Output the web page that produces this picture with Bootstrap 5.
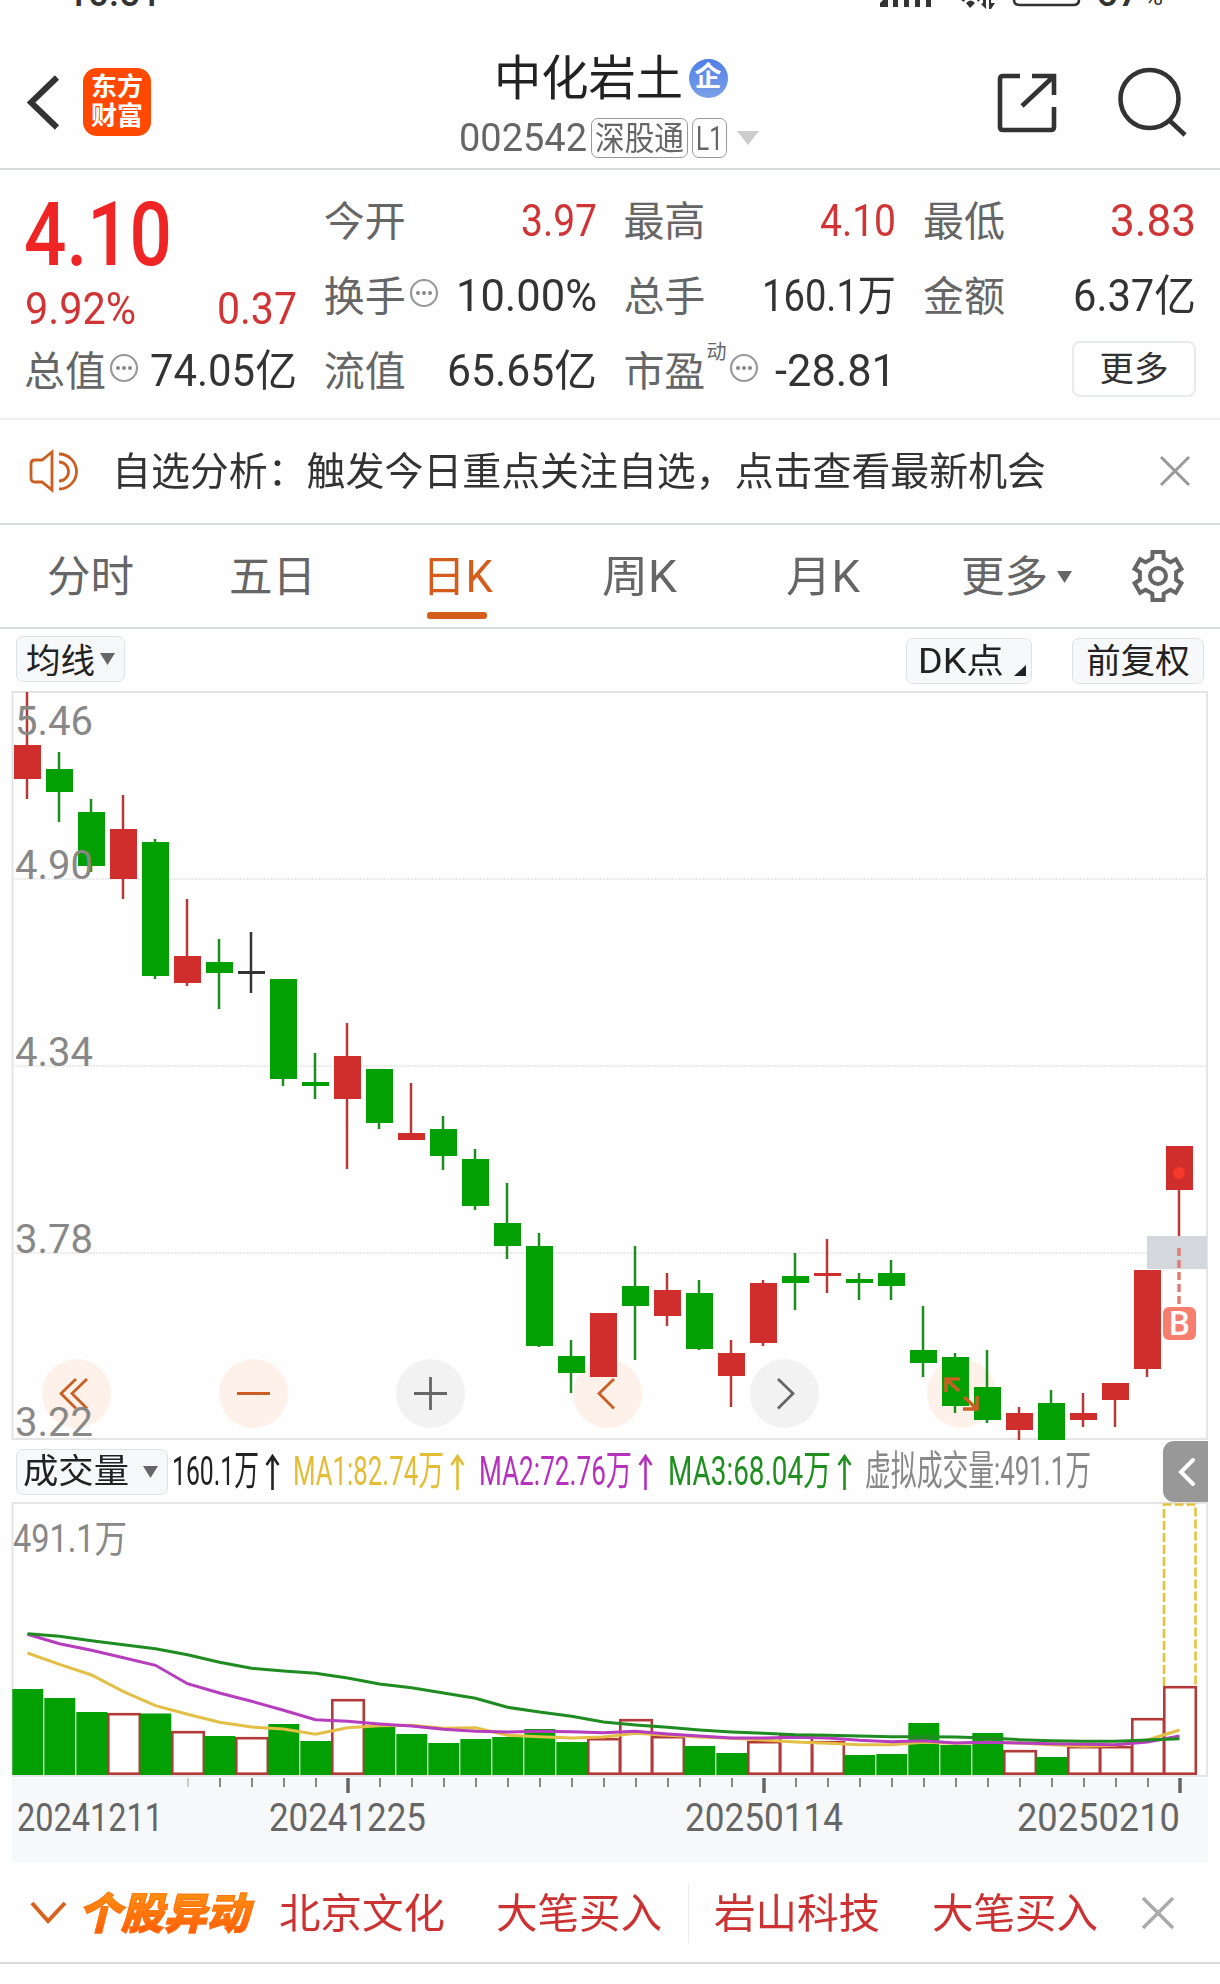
<!DOCTYPE html>
<html lang="zh-CN">
<head>
<meta charset="utf-8">
<meta name="viewport" content="width=device-width, initial-scale=1">
<title>中化岩土 002542</title>
<link rel="stylesheet" href="https://cdn.jsdelivr.net/npm/bootstrap@5.3.0/dist/css/bootstrap.min.css">
<style>
body{width:1220px;height:1984px;overflow:hidden;background:#fefefe;color:#333;font-family:Roboto,"Noto Sans CJK SC",sans-serif;line-height:1}
svg{display:block;flex:none}
svg text{font-family:Roboto,"Noto Sans CJK SC",sans-serif}
.fit{display:inline-block;white-space:nowrap;transform-origin:0 50%;flex:none}
.up{color:#d03434}.dim{color:#666}
.topbar{height:170px;border-bottom:2px solid #d9dada}
.statusbar{height:10px}
.headgrid{display:grid;grid-template-columns:450px 320px 1fr;height:158px}
.backbox{padding:56px 0 0 27px;gap:23px}
.applogo{width:68px;height:68px;border-radius:14px;background:#ff4800;color:#fff;font-size:26px;font-weight:700;line-height:29px;margin-top:2px}
.stockname{font-size:47.5px;color:#222;height:48px;margin-top:45px;line-height:48px}
.certdot{width:39px;height:39px;border-radius:50%;background:linear-gradient(#5080e6,#7ba0e8);color:#fff;font-size:27px;font-weight:700;line-height:37px;margin:-2px -1px 0 6px}
.coderow{font-size:39px;color:#666;height:42px;margin-top:14px}
.chip{border:1.5px solid #999;border-radius:7px;height:40px;font-size:33px;padding:0 3px;margin-left:4px}
.quote{height:250px;padding:14px 0 0 25px;border-bottom:2px solid #efefef;display:grid;grid-template-columns:repeat(4,272px);column-gap:27.7px;grid-template-rows:75px 75px 75px;font-size:43.5px}
.quote .cell{height:75px;padding-top:1px}
.quote .lbl{font-size:41px;color:#666;margin-left:-1px}
.pricebox{grid-row:1/3;font-size:45px}
.bigprice{font-size:89px;font-weight:500;color:#ef2525;height:94px;line-height:94px;margin-left:-1px}
.morebtn{width:124px;height:56px;border:2px solid #e8eaeb;border-radius:8px;font-size:34.5px;line-height:50px;padding:0;color:#333;background:#fff;margin:-6px 0 0 auto}
.sup{font-size:20px;align-self:flex-start;margin-top:7px;margin-left:1px}
.notice{height:105px;border-bottom:2px solid #dadcdc;padding-left:26px;font-size:39px}
.notice .fit{margin-top:2px}
.tabs{height:104px;border-bottom:2px solid #dadcdc;font-size:43.5px;color:#666;display:grid;grid-template-columns:47px 182px 193px 180px 184px 175px 168px 87px;align-items:center}
.tabs>span{padding-top:4px}
.tabs .on{color:#d45d1b;position:relative}
.tabs .on::after{content:"";position:absolute;left:5px;top:60px;width:60px;height:7px;border-radius:3px;background:#d45d1b}
.tools{height:55px;padding:7px 16px 0}
.tool{border:1.5px solid #dfe2e5;border-radius:7px;background:#f7f8fa;color:#222;height:46px;font-size:34.5px}
.volrow{height:61px;font-size:40.5px}
.side{width:45px;height:61px;background:#989898;border-radius:11px 0 0 11px}
.movers{height:101px;border-bottom:2px solid #d9dada;font-size:41.4px;color:#cc3232;padding-left:30px}
.movers span{padding-top:4px}
.tagword{font-size:43px;font-weight:900;font-style:italic;background:linear-gradient(#ff9712,#ff5807);-webkit-background-clip:text;background-clip:text;color:transparent;-webkit-text-stroke:1px #ff7210;padding-right:7px}
</style>
<script src="https://cdn.jsdelivr.net/npm/bootstrap@5.3.0/dist/js/bootstrap.bundle.min.js"></script>
</head>
<body>
<header class="topbar">
  <div class="statusbar">
    <svg width="1220" height="10" viewBox="0 0 1220 10" fill="#333">
      <text x="67" y="6" font-size="38" font-weight="500" textLength="94" lengthAdjust="spacingAndGlyphs">10:51</text>
      <path d="M880 7V3l3-3h5v7zM893 0h5v7h-5zM904 0h5v7h-5zM915 0h5v7h-5zM926 0h5v7h-5z"/>
      <path d="M961 0h4l-1 2zM966 3q5-5 9 0l-5 5zM977 0h3l-2 2zM983 0h3v9l-5-5 2-1zM989 0h2v3h4l-4 6h-2z"/>
      <path d="M1014-10V0q0 5 6 5h53q6 0 6-5v-10" fill="none" stroke="#333" stroke-width="2.6"/>
      <text x="1096" y="6" font-size="38" font-weight="500" textLength="44" lengthAdjust="spacingAndGlyphs">67</text>
      <text x="1144" y="5" font-size="23" textLength="19" lengthAdjust="spacingAndGlyphs">%</text>
    </svg>
  </div>
  <div class="headgrid">
    <div class="d-flex align-items-start backbox">
      <svg width="33" height="72" viewBox="0 0 33 72"><path d="M30 12 4 37l26 25" transform="translate(0 -.5)" fill="none" stroke="#333" stroke-width="6"/></svg>
      <div class="applogo text-center d-flex flex-column justify-content-center"><span>东方</span><span>财富</span></div>
    </div>
    <div class="d-flex flex-column align-items-center">
      <div class="d-flex align-items-center stockname"><span class="fit" data-w="189">中化岩土</span><span class="certdot text-center">企</span></div>
      <div class="d-flex align-items-center coderow"><span class="fit" data-w="128">002542</span><span class="chip d-flex align-items-center"><span class="fit" data-w="89">深股通</span></span><span class="chip d-flex align-items-center"><span class="fit" data-w="27">L1</span></span><svg class="ms-2" width="26" height="18"><path d="M2 2h22L13 16z" fill="#ccc"/></svg></div>
    </div>
    <div class="d-flex align-items-start justify-content-end">
      <svg width="200" height="140" viewBox="990 10 200 140" style="margin-right:30px" fill="none" stroke="#333" stroke-width="4.6"><path d="M1020 76h-17q-3 0-3 3v48q0 3 3 3h48q3 0 3-3v-20M1032 76h22v19M1053 77l-31 29"/><circle cx="1149.500" cy="99" r="29"/><path d="m1169 120 16 15"/></svg>
    </div>
  </div>
</header>

<section class="quote">
  <div class="pricebox">
    <div class="bigprice mt-1"><span class="fit" data-w="148">4.10</span></div>
    <div class="d-flex justify-content-between up pt-1"><span class="fit" data-w="111">9.92%</span><span class="fit" data-w="80">0.37</span></div>
  </div>
  <div class="cell d-flex align-items-center justify-content-between"><span class="lbl">今开</span><span class="fit up" data-w="76">3.97</span></div>
  <div class="cell d-flex align-items-center justify-content-between"><span class="lbl">最高</span><span class="fit up" data-w="76">4.10</span></div>
  <div class="cell d-flex align-items-center justify-content-between"><span class="lbl">最低</span><span class="fit up" data-w="86">3.83</span></div>
  <div class="cell d-flex align-items-center"><span class="lbl">换手</span><svg class="dots" width="32" height="32" viewBox="0 0 32 32"></svg><span class="fit ms-auto" data-w="141">10.00%</span></div>
  <div class="cell d-flex align-items-center justify-content-between"><span class="lbl">总手</span><span class="fit" data-w="134">160.1万</span></div>
  <div class="cell d-flex align-items-center justify-content-between"><span class="lbl">金额</span><span class="fit" data-w="123">6.37亿</span></div>
  <div class="cell d-flex align-items-center"><span class="lbl">总值</span><svg class="dots" width="32" height="32" viewBox="0 0 32 32"></svg><span class="fit ms-auto" data-w="147">74.05亿</span></div>
  <div class="cell d-flex align-items-center justify-content-between"><span class="lbl">流值</span><span class="fit" data-w="150">65.65亿</span></div>
  <div class="cell d-flex align-items-center"><span class="lbl">市盈</span><span class="sup dim">动</span><svg class="dots" width="32" height="32" viewBox="0 0 32 32"></svg><span class="fit ms-auto" data-w="121">-28.81</span></div>
  <div class="cell d-flex align-items-center"><button class="btn morebtn">更多</button></div>
</section>

<section class="notice d-flex align-items-center">
  <svg width="86" height="50" viewBox="27 447 86 50" fill="none" stroke="#cb5f20" stroke-width="2.8"><path d="M53 452 43 460h-7q-4 0-4 4v14q0 4 4 4h7l10 8zM60 454a17.5 17.5 0 0 1 0 35M60 462a9.5 9.5 0 0 1 0 19"/></svg>
  <span class="fit" data-w="934">自选分析：触发今日重点关注自选，点击查看最新机会</span>
  <svg class="ms-auto" style="margin-right:28px" width="34" height="34"><path d="m3 2 28 28M31 2 3 30" stroke="#999" stroke-width="3"/></svg>
</section>

<nav class="tabs">
  <i></i><span>分时</span><span>五日</span><span class="on"><span class="fit" data-w="71">日K</span></span><span><span class="fit" data-w="75">周K</span></span><span><span class="fit" data-w="74">月K</span></span>
  <span class="d-flex align-items-center"><span>更多</span><svg style="margin-left:8px" width="18" height="14"><path d="M1 0h15L8.500 12z" fill="#666"/></svg></span>
  <svg id="gear" width="60" height="60" viewBox="-29 -30 60 60" fill="none" stroke="#666" stroke-width="4"></svg>
</nav>

<div class="tools d-flex align-items-start">
  <div class="tool d-flex align-items-center" style="width:109px;padding-left:9px"><span class="pt-1">均线</span><svg style="margin-left:5px" width="16" height="14"><path d="M0 1h15L7.500 13z" fill="#666"/></svg></div>
  <div class="tool d-flex align-items-center ms-auto" style="width:126px;padding-left:11px;margin-top:2px"><span class="fit" data-w="86">DK点</span><svg style="margin-left:10px" width="12" height="34"><path d="M12 21v11H0z" fill="#222"/></svg></div>
  <div class="tool d-flex align-items-center justify-content-center" style="width:132px;margin:2px 0 0 40px">前复权</div>
</div>

<svg id="kline" width="1220" height="757" viewBox="0 684 1220 757"></svg>

<div class="volrow d-flex align-items-center">
  <div class="tool d-flex align-items-center" style="width:152px;margin-left:16px;padding-left:6px"><span class="fit" data-w="106">成交量</span><svg style="margin-left:14px" width="16" height="14"><path d="M0 1h15L7.500 13z" fill="#666"/></svg></div>
  <span class="fit" data-w="87" style="margin-left:4px;color:#222">160.1万</span><svg class="arr" data-c="#222" width="27" height="40"></svg>
  <span class="fit" data-w="151" style="margin-left:7px;color:#e3bd35">MA1:82.74万</span><svg class="arr" data-c="#e3bd35" width="27" height="40"></svg>
  <span class="fit" data-w="153" style="margin-left:8px;color:#b632bd">MA2:72.76万</span><svg class="arr" data-c="#b632bd" width="27" height="40"></svg>
  <span class="fit" data-w="163" style="margin-left:9px;color:#1f901f">MA3:68.04万</span><svg class="arr" data-c="#1f901f" width="27" height="40"></svg>
  <span class="fit" data-w="226" style="margin-left:7px;color:#888">虚拟成交量:491.1万</span>
  <div class="side ms-auto d-flex align-items-center justify-content-center" style="margin-right:12px"><svg width="20" height="32"><path d="M17 4 5 16l12 12" fill="none" stroke="#fff" stroke-width="4" stroke-linecap="round"/></svg></div>
</div>

<svg id="volume" width="1220" height="361" viewBox="0 1502 1220 361"></svg>

<footer class="movers d-flex align-items-center">
  <svg width="38" height="24"><path d="m2 2 16 18L35 2" fill="none" stroke="#d9621f" stroke-width="4"/></svg>
  <span class="fit tagword" data-w="178" style="margin-left:10px">个股异动</span>
  <span class="fit" data-w="166" style="margin-left:23px">北京文化</span>
  <span class="fit" data-w="166" style="margin-left:51px">大笔买入</span>
  <i class="vr" style="margin-left:26px;height:60px;align-self:center;color:#bbb"></i>
  <span class="fit" data-w="166" style="margin-left:25px">岩山科技</span>
  <span class="fit" data-w="166" style="margin-left:52px">大笔买入</span>
  <svg style="margin-left:42px" width="36" height="36"><path d="m3 3 30 30M33 3 3 33" stroke="#aaa" stroke-width="3.500"/></svg>
</footer>

<script>
document.querySelectorAll('.fit').forEach(function(e){
  var w=+e.dataset.w,n=e.getBoundingClientRect().width;
  e.style.width=w+'px';e.style.transform='scaleX('+(w/n)+')';
  if(e.classList.contains('tagword')){e.style.width=n+'px';e.style.marginRight=(w-n)+'px';}
});
document.querySelectorAll('.dots').forEach(function(s){
  s.innerHTML='<circle cx="18" cy="14" r="13" fill="none" stroke="#999" stroke-width="2.2"/><g fill="#888"><circle cx="12" cy="14" r="2"/><circle cx="18" cy="14" r="2"/><circle cx="24" cy="14" r="2"/></g>';
  s.style.marginTop='-5px';
});
document.querySelectorAll('.arr').forEach(function(s){
  s.innerHTML='<path d="M13.500 4v34M7.500 13l6-9 6 9" fill="none" stroke-width="2.6" stroke="'+s.dataset.c+'"/>';
});
// Gear outline: six rectangular teeth
(function(){
  var p=[];
  for(var k=0;k<6;k++){[[-13,24.500],[13,24.500],[18,18.500],[42,18.500]].forEach(function(q){
    var a=(k*60+q[0]-90)*Math.PI/180;p.push((q[1]*Math.cos(a)).toFixed(1)+','+(q[1]*Math.sin(a)).toFixed(1));});}
  document.getElementById('gear').innerHTML='<polygon points="'+p.join(' ')+'"/><circle r="8"/>';
})();
var X=function(i){return 27.500+32*i},R='#d02e2c',G='#03a003';
// wick top, body top, body bottom, wick bottom, direction
var K=[[692,745,779,799,1],[752,769,792,822,0],[799,812,866,872,0],[795,829,879,899,1],[839,842,976,979,0],[899,956,983,986,1],[939,962,973,1009,0],[932,971,974,993,2],[979,979,1079,1086,0],[1053,1082,1086,1099,0],[1023,1056,1099,1169,1],[1069,1069,1123,1129,0],[1083,1133,1140,1140,1],[1116,1129,1156,1170,0],[1149,1159,1206,1210,0],[1183,1223,1246,1259,0],[1233,1246,1346,1347,0],[1340,1356,1373,1393,0],[1313,1313,1377,1377,1],[1246,1286,1306,1360,0],[1273,1290,1316,1326,1],[1280,1293,1349,1350,0],[1340,1353,1376,1407,1],[1280,1283,1343,1346,1],[1253,1276,1283,1310,0],[1239,1273,1276,1293,1],[1273,1279,1283,1300,0],[1260,1273,1286,1300,0],[1306,1350,1363,1377,0],[1353,1357,1406,1413,0],[1350,1387,1420,1423,0],[1407,1413,1430,1440,1],[1390,1403,1440,1440,0],[1393,1413,1420,1427,1],[1383,1383,1400,1427,1],[1270,1270,1369,1377,1],[1146,1146,1190,1236,1]];
var h='<path d="M12 879H1207M12 1066H1207M12 1253H1207" stroke="#e4e4e4" stroke-width="1.500" stroke-dasharray="2 1"/><path d="M12.500 692H1207V1439H12.500z" fill="none" stroke="#e4e4e4" stroke-width="2"/>';
function disc(x,o){h+='<circle cx="'+x+'" cy="1393.500" r="34.500" fill="'+(o?'#fef1e9':'#f2f2f2')+'"/>';}
[76.500,253.500,430.500,607.500,784.500,961.500].forEach(function(x,i){disc(x,i!==2&&i!==4)});
h+='<rect x="1147" y="1236" width="60" height="33" fill="#d4d7dc"/>';
K.forEach(function(k,i){var c=k[4]===1?R:k[4]===0?G:'#333',x=X(i),d=k[4]===1?'#b83836':k[4]===0?'#1a8f1a':c;
  h+='<path d="M'+(x-.5)+' '+k[0]+'V'+k[3]+'" stroke="'+d+'" stroke-width="2.500"/><rect x="'+(x-13.500)+'" y="'+k[1]+'" width="27" height="'+(k[2]-k[1])+'" fill="'+c+'"/>';});
h+='<g fill="none" stroke="#c95f24" stroke-width="2.800"><path d="M76 1379 61 1393.500l15 15M87 1379l-15 14.500 15 15M237 1393.500h33M614 1379l-15 14.500 15 15"/><path stroke-width="3.600" d="M946 1392v-13h14M946 1379l13 12M964 1397l13 12M963 1409h14v-13"/></g><path d="M414 1393.500h33M430.500 1377v33M778 1379l15 14.500-15 15" fill="none" stroke="#666" stroke-width="2.800"/>';
h+='<circle cx="1179" cy="1173" r="6" fill="#f53a29"/><path d="M1179 1248v57" stroke="#dd7f78" stroke-width="3.500" stroke-dasharray="8 4"/><rect x="1163" y="1307" width="33" height="33" rx="6" fill="#f77e6f"/><text x="1179.500" y="1335" font-size="33" font-weight="500" fill="#fff" text-anchor="middle">B</text>';
[['5.46',735],['4.90',879],['4.34',1066],['3.78',1253],['3.22',1436]].forEach(function(l){h+='<text x="15" y="'+l[1]+'" font-size="41" fill="#888" textLength="78" lengthAdjust="spacingAndGlyphs">'+l[0]+'</text>';});
document.getElementById('kline').innerHTML=h;

// Volume pane: bar tops, negative = hollow (rising day)
var V=[1689,1698,1712,-1713,1713.500,-1731,1736,-1737,1724,1741,-1699,1727,1734,1743,1739,1737,1729,1742,-1738,-1719,-1736,1746,1753,-1741,-1734,-1741,1755,1754,1723,1745,1733,-1750,1757,-1746,-1746,-1718,-1686];
var L={'#e3bf45':[189,223,255,305,347,373,397,411,417,433,413,407,406,415,413,436,440,444,441,430,436,441,445,450,456,460,464,464,457,460,457,459,464,469,466,450,420],
'#b63dbd':[133,161,181,203,226,281,309,334,361,389,394,402,408,418,424,426,424,425,428,424,432,438,444,444,442,444,451,455,452,459,457,459,461,463,464,456,438],
'#1f8c22':[131,139,152,164,176,194,217,235,243,250,264,282,293,309,325,352,366,379,396,405,412,420,426,430,434,436,438,440,440,441,444,449,452,454,454,450,446]};
var v='<rect x="12" y="1778" width="1196" height="84" fill="#f7f8fa"/><path d="M12.500 1503H1207V1776H12.500z" fill="none" stroke="#e4e4e4" stroke-width="2"/>';
V.forEach(function(t,i){var x=12.300+32*i;
  v+=t>0?'<rect x="'+x+'" y="'+t+'" width="31" height="'+(1775-t)+'" fill="'+G+'"/>':'<rect x="'+x+'" y="'+(1.200-t)+'" width="31.500" height="'+(1772.500+t)+'" fill="#fff" stroke="#b23b39" stroke-width="2.600"/>';});
v+='<path d="M1164 1686V1504.500H1195.500V1686" fill="none" stroke="#e3c23e" stroke-width="2.600" stroke-dasharray="9 3"/>';
Object.keys(L).forEach(function(c){v+='<polyline fill="none" stroke="'+c+'" stroke-width="3" points="'+L[c].map(function(y,i){return X(i)+','+(1590+y/3).toFixed(1)}).join(' ')+'"/>';});
for(var i=5;i<37;i++){var m=i===10||i===23||i===36;v+='<path d="M'+(X(i)+.500)+' 1778v'+(m?15:9)+'" stroke="'+(m?'#666':i===5?'#ccc':'#888')+'" stroke-width="'+(m?3.500:2)+'"/>';}
[['20241211',17,146],['20241225',269,157],['20250114',685,158],['20250210',1017,163]].forEach(function(d){v+='<text x="'+d[1]+'" y="1831" font-size="38" fill="#666" textLength="'+d[2]+'" lengthAdjust="spacingAndGlyphs">'+d[0]+'</text>';});
v+='<text x="13" y="1552" font-size="38" fill="#888" textLength="114" lengthAdjust="spacingAndGlyphs">491.1万</text>';
document.getElementById('volume').innerHTML=v;
</script>
</body>
</html>
